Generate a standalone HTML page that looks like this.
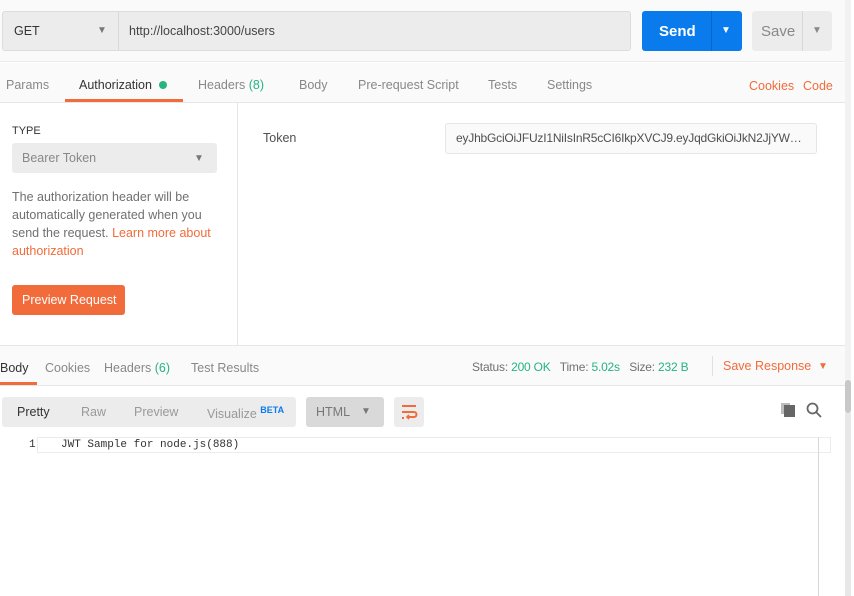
<!DOCTYPE html>
<html><head><meta charset="utf-8"><style>
*{box-sizing:border-box;margin:0;padding:0}
body{width:854px;height:596px;overflow:hidden;background:#fff;font-family:"Liberation Sans",sans-serif;font-size:12.5px;color:#505050;position:relative}
.a{position:absolute}
.t{position:absolute;white-space:nowrap}
</style></head><body>
<div class="a" style="left:0;top:0;width:845px;height:62px;background:#fafafa;border-bottom:1px solid #ececec"></div>
<div class="a" style="left:2px;top:11px;width:629px;height:40px;background:#ececec;border:1px solid #dcdcdc;border-radius:3px"></div>
<div class="a" style="left:118px;top:12px;width:1px;height:38px;background:#d8d8d8"></div>
<div class="t" style="left:14px;top:24px;color:#333">GET</div>
<div class="t" style="left:97px;top:25px;font-size:10px;color:#777">▼</div>
<div class="t" style="left:129px;top:24px;color:#444">http://localhost:3000/users</div>
<div class="a" style="left:642px;top:11px;width:100px;height:40px;background:#097bed;border-radius:3px"></div>
<div class="a" style="left:711px;top:11px;width:1px;height:40px;background:#0a66c4"></div>
<div class="t" style="left:659px;top:23px;color:#fff;font-weight:bold;font-size:15px">Send</div>
<div class="t" style="left:721px;top:25px;color:#fff;font-size:10px">▼</div>
<div class="a" style="left:752px;top:11px;width:80px;height:40px;background:#ececec;border-radius:3px"></div>
<div class="a" style="left:802px;top:11px;width:1px;height:40px;background:#d8d8d8"></div>
<div class="t" style="left:761px;top:23px;color:#888;font-size:15px">Save</div>
<div class="t" style="left:812px;top:25px;color:#888;font-size:10px">▼</div>
<div class="a" style="left:0;top:63px;width:845px;height:40px;background:#fafafa;border-bottom:1px solid #e6e6e6"></div>
<div class="t" style="left:6px;top:78px;color:#888">Params</div>
<div class="t" style="left:79px;top:78px;color:#333">Authorization</div>
<div class="a" style="left:159px;top:81px;width:8px;height:8px;border-radius:50%;background:#26b47f"></div>
<div class="a" style="left:65px;top:99px;width:118px;height:3px;background:#f26b3a"></div>
<div class="t" style="left:198px;top:78px;color:#888">Headers <span style="color:#26b47f">(8)</span></div>
<div class="t" style="left:299px;top:78px;color:#888">Body</div>
<div class="t" style="left:358px;top:78px;color:#888">Pre-request Script</div>
<div class="t" style="left:488px;top:78px;color:#888">Tests</div>
<div class="t" style="left:547px;top:78px;color:#888">Settings</div>
<div class="t" style="left:749px;top:79px;color:#f26b3a">Cookies</div>
<div class="t" style="left:803px;top:79px;color:#f26b3a">Code</div>
<div class="a" style="left:237px;top:103px;width:1px;height:242px;background:#e6e6e6"></div>
<div class="t" style="left:12px;top:125px;font-size:11px;color:#333">TYPE</div>
<div class="a" style="left:12px;top:143px;width:205px;height:30px;background:#ececec;border-radius:3px"></div>
<div class="t" style="left:22px;top:151px;color:#888">Bearer Token</div>
<div class="t" style="left:194px;top:153px;font-size:10px;color:#777">▼</div>
<div class="a" style="left:12px;top:188px;width:215px;line-height:18px;color:#707070">The authorization header will be automatically generated when you send the request. <span style="color:#f26b3a">Learn more about authorization</span></div>
<div class="a" style="left:12px;top:285px;width:113px;height:30px;background:#f26b3a;border-radius:3px"></div>
<div class="t" style="left:22px;top:293px;color:#fff">Preview Request</div>
<div class="t" style="left:263px;top:131px;color:#505050">Token</div>
<div class="a" style="left:445px;top:123px;width:372px;height:31px;background:#fafafa;border:1px solid #e6e6e6;border-radius:3px;padding:7px 10px;overflow:hidden;white-space:nowrap;text-overflow:ellipsis;font-size:12px;letter-spacing:-0.2px">eyJhbGciOiJFUzI1NiIsInR5cCI6IkpXVCJ9.eyJqdGkiOiJkN2JjYWFkMjQ3NTc</div>
<div class="a" style="left:0;top:345px;width:845px;height:41px;background:#fafafa;border-top:1px solid #e6e6e6;border-bottom:1px solid #e6e6e6"></div>
<div class="t" style="left:0;top:361px;color:#333">Body</div>
<div class="a" style="left:0;top:382px;width:37px;height:3px;background:#f26b3a"></div>
<div class="t" style="left:45px;top:361px;color:#888">Cookies</div>
<div class="t" style="left:104px;top:361px;color:#888">Headers <span style="color:#26b47f">(6)</span></div>
<div class="t" style="left:191px;top:361px;color:#888">Test Results</div>
<div class="t" style="left:472px;top:360px;font-size:12px;color:#707070;letter-spacing:-0.2px">Status: <span style="color:#26b47f">200 OK</span>&nbsp;&nbsp; Time: <span style="color:#26b47f">5.02s</span>&nbsp;&nbsp; Size: <span style="color:#26b47f">232 B</span></div>
<div class="a" style="left:712px;top:356px;width:1px;height:20px;background:#e0e0e0"></div>
<div class="t" style="left:723px;top:359px;color:#f26b3a">Save Response</div>
<div class="t" style="left:818px;top:361px;color:#f26b3a;font-size:10px">▼</div>
<div class="a" style="left:0;top:386px;width:845px;height:210px;background:#fff"></div>
<div class="a" style="left:2px;top:397px;width:294px;height:30px;background:#ececec;border-radius:3px"></div>
<div class="t" style="left:17px;top:405px;color:#333">Pretty</div>
<div class="t" style="left:81px;top:405px;color:#999">Raw</div>
<div class="t" style="left:134px;top:405px;color:#999">Preview</div>
<div class="t" style="left:207px;top:405px;color:#999">Visualize <sup style="color:#097bed;font-size:9px;font-weight:bold">BETA</sup></div>
<div class="a" style="left:306px;top:397px;width:78px;height:30px;background:#d9d9d9;border-radius:3px"></div>
<div class="t" style="left:316px;top:405px;color:#777">HTML</div>
<div class="t" style="left:361px;top:406px;font-size:10px;color:#777">▼</div>
<div class="a" style="left:394px;top:397px;width:30px;height:30px;background:#ececec;border-radius:3px"></div>
<svg class="a" style="left:400px;top:403px" width="18" height="18" viewBox="0 0 18 18" fill="none" stroke="#f26b3a" stroke-width="2"><path d="M2 3h14M2 9h12a2.5 2.5 0 0 1 0 5H7M2 15h2"/><path d="M9 12l-2 2 2 2" stroke-width="1.6"/></svg>
<div class="a" style="left:781px;top:403px;width:9px;height:11px;background:#bbb"></div>
<div class="a" style="left:784px;top:405px;width:11px;height:12px;background:#666"></div>
<svg class="a" style="left:806px;top:402px" width="16" height="16" viewBox="0 0 16 16" fill="none" stroke="#666" stroke-width="1.8"><circle cx="6.5" cy="6.5" r="5"/><path d="M10 10l5 5"/></svg>
<div class="a" style="left:37px;top:437px;width:794px;height:16px;border:1px solid #ececec"></div>
<div class="a" style="left:818px;top:437px;width:1px;height:159px;background:#d8d8d8"></div>
<div class="t" style="left:29px;top:439px;font-family:'Liberation Mono',monospace;font-size:11px;color:#333">1</div>
<div class="t" style="left:61px;top:439px;font-family:'Liberation Mono',monospace;font-size:11px;color:#333">JWT Sample for node.js(888)</div>
<div class="a" style="left:845px;top:0;width:6px;height:596px;background:#e8e8e8"></div>
<div class="a" style="left:845px;top:0;width:6px;height:413px;background:#f2f2f2"></div>
<div class="a" style="left:845px;top:380px;width:6px;height:33px;background:#c8c8c8;border-radius:3px"></div>
</body></html>
